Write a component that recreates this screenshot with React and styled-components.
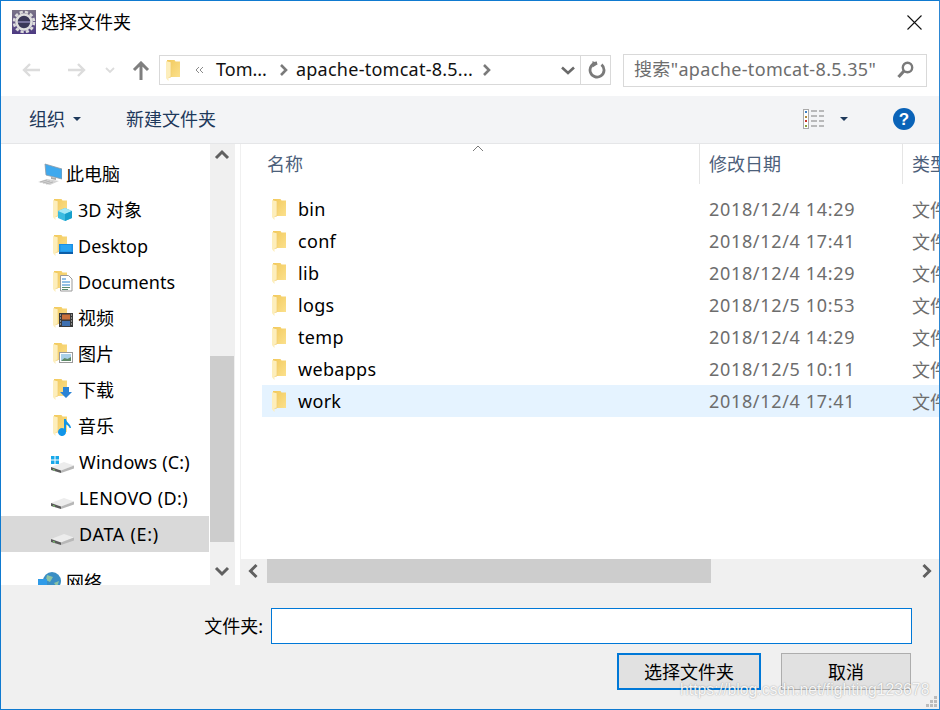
import React from "react";
import styled, { createGlobalStyle } from "styled-components";

const Global = createGlobalStyle`
  html, body { margin: 0; padding: 0; background: #fff; }
  * { box-sizing: border-box; }
  body { font-family: "Noto Sans", "Noto Sans CJK SC", sans-serif; font-size: 18px; color: #000; }
`;

const Window = styled.div`
  position: relative; width: 940px; height: 710px; border: 1px solid #0f7ad0; border-right-color: #2d87d3;
  background: #fff; display: flex; flex-direction: column; overflow: hidden;
`;
const TitleBar = styled.div`
  height: 44px; flex: none; display: flex; align-items: center; padding: 0 17px 2px 11px;
`;
const Title = styled.div`
  margin-left: 5px; flex: 1; font-size: 18px; line-height: 24px;
`;
const NavBar = styled.div`
  height: 51px; flex: none; display: flex; align-items: center; padding: 0 12px 1px 19px;
`;
const NavIcon = styled.span`
  display: inline-flex; flex: none; width: ${p => p.$w}px; margin-right: ${p => p.$mr || 0}px; align-items: center; justify-content: center;
`;
const AddressBox = styled.div`
  width: 452px; height: 30px; flex: none; border: 1px solid #d9d9d9; display: flex; align-items: center; padding-left: 6px; margin-left: 8px;
`;
const Crumb = styled.span`
  margin: 0 0 2px ${p => p.$ml}px; white-space: nowrap; line-height: 26px; color: #111; letter-spacing: ${p => p.$ls || 0}px;
`;
const AddressSep = styled.div`
  width: 1px; height: 28px; flex: none; background: #d9d9d9; margin: 0 7px 0 5px;
`;
const SearchBox = styled.div`
  width: 304px; height: 33px; flex: none; margin-left: 12px; border: 1px solid #d9d9d9; display: flex; align-items: center; justify-content: space-between; padding: 0 12px 0 10px;
  color: #6d6d6d; font-size: 18px; white-space: nowrap; letter-spacing: .35px;
`;
const SearchText = styled.span`
  margin-bottom: 2px; line-height: 26px;
`;
const Toolbar = styled.div`
  height: 48px; flex: none; background: #f3f4f6; border-bottom: 1px solid #e5e6e8; display: flex; align-items: center; padding: 0 24px 2px 28px; color: #1e395b;
`;
const ToolLabel = styled.span`
  line-height: 24px; margin-left: ${p => p.$ml || 0}px;
`;
const Caret = styled.span`
  display: inline-block; width: 0; height: 0; border-left: 4px solid transparent; border-right: 4px solid transparent; border-top: 4px solid #1e395b;
  margin-left: ${p => p.$ml}px; flex: none;
`;
const Spacer = styled.div`
  flex: 1;
`;
const Main = styled.div`
  height: 441px; flex: none; display: flex; overflow: hidden;
`;
const Sidebar = styled.div`
  width: 209px; flex: none; overflow: hidden; padding-top: 12px;
`;
const TreeRow = styled.div`
  height: 36px; display: flex; align-items: center; padding-left: ${p => p.$pl}px; white-space: nowrap; margin-right: 1px;
  background: ${p => p.$selected ? "#d9d9d9" : "transparent"};
  margin-top: ${p => p.$gap || 0}px;
`;
const TreeLabel = styled.span`
  margin-left: ${p => p.$ml}px; line-height: 24px; letter-spacing: ${p => p.$ls || 0}px;
`;
const VScroll = styled.div`
  width: 25px; flex: none; background: #f0f0f0; display: flex; flex-direction: column;
`;
const ArrowCell = styled.div`
  height: ${p => p.$h}px; flex: none; display: flex; align-items: center; justify-content: center; padding-right: 1px;
`;
const VTrack = styled.div`
  height: 188px; flex: none;
`;
const VThumb = styled.div`
  height: 186px; width: 24px; flex: none; background: #cdcdcd;
`;
const Divider = styled.div`
  width: 6px; flex: none; background: #fff; border-right: 1px solid #f0f0f0;
`;
const Content = styled.div`
  flex: 1; min-width: 0; display: flex; flex-direction: column;
`;
const HeaderRow = styled.div`
  height: 40px; flex: none; display: grid; grid-template-columns: 459px 203px 1fr; position: relative;
`;
const HeaderCell = styled.div`
  color: #4c607a; padding-left: ${p => p.$pl}px; line-height: 40px; white-space: nowrap; overflow: hidden;
  border-right: ${p => p.$line ? "1px solid #e5e5e5" : "none"};
`;
const SortCaret = styled.svg`
  position: absolute; left: 231px; top: 1px;
`;
const FileList = styled.div`
  flex: 1; padding: 9px 0 0 21px;
`;
const FileRow = styled.div`
  height: 32px; display: grid; grid-template-columns: 26px 411px 203px 1fr; align-items: center; padding-left: 10px; white-space: nowrap; overflow: hidden;
  background: ${p => p.$selected ? "#e5f3ff" : "transparent"};
`;
const FileName = styled.span`
  letter-spacing: .3px;
`;
const FileDate = styled.span`
  color: #6d6d6d; letter-spacing: .67px;
`;
const FileType = styled.span`
  color: #6d6d6d;
`;
const HScroll = styled.div`
  height: 26px; flex: none; background: #f0f0f0; display: flex; align-items: flex-start;
`;
const HThumb = styled.div`
  width: 444px; height: 24px; flex: none; background: #cdcdcd;
`;
const HArrow = styled.div`
  width: 26px; height: 24px; flex: none; display: flex; align-items: center; justify-content: center;
`;
const Footer = styled.div`
  flex: 1; background: #f0f0f0; display: flex; flex-direction: column; padding: 23px 27px 0 0; align-items: flex-end;
`;
const InputRow = styled.div`
  display: flex; align-items: center; height: 36px;
`;
const Label = styled.label`
  margin-right: 8px; line-height: 24px;
`;
const TextBox = styled.div`
  width: 641px; height: 36px; background: #fff; border: 1px solid #0078d7;
`;
const ButtonRow = styled.div`
  display: flex; margin-top: 9px; gap: 20px; margin-right: 1px;
`;
const Button = styled.button`
  width: ${p => p.$w}px; height: 37px; font: inherit; color: #000; background: #e1e1e1; padding: 0 0 2px;
  border: ${p => p.$primary ? "2px solid #0078d7" : "1px solid #adadad"};
`;
const Watermark = styled.div`
  position: absolute; left: 679px; top: 677px; font-family: "Liberation Sans", sans-serif; font-size: 15.800px; line-height: 24px; color: rgba(255,255,255,.92); white-space: nowrap;
  text-shadow: 0 0 1.500px rgba(0,0,0,.4);
`;
const Grip = styled.svg`
  position: absolute; right: 1px; bottom: 1px;
`;

const FolderShape = ({ id }) => (
  <>
    <defs>
      <linearGradient id={id} x1="0" y1="0" x2="1" y2="1">
        <stop offset="0" stopColor="#f2c95c" />
        <stop offset="1" stopColor="#fbe08c" />
      </linearGradient>
    </defs>
    <path d="M1 0h7.500l1 1.500H14V17H4V2H1z" fill={`url(#${id})`} />
    <path d="M0 1l5 1.600V17l-2.500.6V21L1 19.500 0 18z" fill="#fdeebb" />
    <path d="M5 2.600V17l-2.500.6" fill="none" stroke="#f0cd70" strokeWidth=".7" />
  </>
);

const Folder = ({ id }) => (
  <svg width="14" height="21" viewBox="0 0 14 21"><FolderShape id={id} /></svg>
);

const overlays = {
  cube: <g><path d="M6 14l7-3 7 3v7l-7 3-7-3z" fill="#3bbbe0"/><path d="M6 14l7 3 7-3-7-3z" fill="#a4e8f6"/><path d="M13 17v7l7-3v-7z" fill="#17a0cc"/></g>,
  desk: <g><rect x="7" y="11" width="14" height="10" fill="#1a8fe6"/><rect x="7" y="19" width="14" height="2" fill="#0c5ea8"/><rect x="8.500" y="12" width="11" height="6.500" fill="#2aa5f2"/></g>,
  doc: <g><path d="M8.500 6.500h8l3.500 3.500v12H8.500z" fill="#fff" stroke="#9a9a9a"/><path d="M10 10h4M10 13h8M10 16h8" stroke="#2a82cc"/><path d="M10 18.500h8M10 20.500h6" stroke="#5b8a6e"/></g>,
  film: <g><rect x="7" y="8" width="14" height="14" fill="#3a3a3a"/><rect x="10" y="9.500" width="8" height="5" fill="#c9703a"/><rect x="10" y="16" width="8" height="5" fill="#3d6fb0"/><path d="M8 10h1M8 13h1M8 16h1M8 19h1M19 10h1M19 13h1M19 16h1M19 19h1" stroke="#ddd"/></g>,
  pic: <g><rect x="7.500" y="11.500" width="13" height="10" fill="#fff" stroke="#9a9a9a"/><rect x="9" y="13" width="10" height="7" fill="#a9cfe8"/><path d="M9 20l3.500-3 3 1 3.500-2v4z" fill="#5f8a68"/></g>,
  down: <path d="M11 10h6v5h3l-6 6-6-6h3z" fill="#2a83d6"/>,
  music: <path d="M12 6h2c.5 4 5 5 5 9h-1.500c0-1.500-2-3-3.500-3.500V19a4 4 0 1 1-2-3.400z" fill="#1295e8"/>,
};

const LibIcon = ({ kind }) => (
  <svg width="24" height="26" viewBox="0 0 24 26">
    <g transform="translate(1 2)"><FolderShape id={`lib-${kind}`} /></g>
    {overlays[kind]}
  </svg>
);

const Drive = ({ win }) => (
  <svg width="26" height="23" viewBox="0 0 26 23">
    {win && <g fill="#18a8ea"><rect x="2" y="5" width="3.500" height="3.500"/><rect x="6.500" y="5" width="3.500" height="3.500"/><rect x="2" y="9.500" width="3.500" height="3.500"/><rect x="6.500" y="9.500" width="3.500" height="3.500"/></g>}
    <path d="M2 16l13-5 10 3.500L12 19.500z" fill="#ececec"/>
    <path d="M12 19.500l13-5v3l-13 4.500z" fill="#b8b8b8"/>
    <path d="M2 16l10 3.500V22L2 19z" fill="#5a5a5a"/>
    <path d="M4 18l2 .7v1l-2-.6z" fill="#7ed66f"/>
  </svg>
);

const Chevron = ({ dir, color = "#606060" }) => {
  const d = { up: "M2 10l6-6 6 6", down: "M2 5l6 6 6-6", left: "M10.500 2L4.500 8l6 6", right: "M5.500 2l6 6-6 6" }[dir];
  return <svg width="16" height="16" viewBox="0 0 16 16"><path d={d} fill="none" stroke={color} strokeWidth="3"/></svg>;
};

const files = [
  ["bin", "2018/12/4 14:29"], ["conf", "2018/12/4 17:41"], ["lib", "2018/12/4 14:29"], ["logs", "2018/12/5 10:53"],
  ["temp", "2018/12/4 14:29"], ["webapps", "2018/12/5 10:11"], ["work", "2018/12/4 17:41", true],
];
const libs = [["cube", "3D 对象"], ["desk", "Desktop"], ["doc", "Documents"], ["film", "视频"], ["pic", "图片"], ["down", "下载"], ["music", "音乐"]];

export default function App() {
  return (
    <Window>
      <Global />
      <TitleBar>
        <svg width="24" height="24" viewBox="0 0 24 24">
          <defs>
            <linearGradient id="appbg" x1="0" y1="0" x2="0" y2="1">
              <stop offset="0" stopColor="#7a7488" />
              <stop offset="1" stopColor="#4d3a82" />
            </linearGradient>
          </defs>
          <rect width="24" height="24" fill="url(#appbg)"/>
          <circle cx="12" cy="12" r="10" fill="none" stroke="#dcdcdc" strokeWidth="2.600" strokeDasharray="3.200 2.100"/>
          <circle cx="12" cy="12" r="7.500" fill="#3a3858" stroke="#dedede" strokeWidth="2.600"/>
          <rect x="6" y="11" width="12" height="2" fill="#77729c"/>
        </svg>
        <Title>选择文件夹</Title>
        <svg width="15" height="15" viewBox="0 0 15 15"><path d="M.5.500l14 14M14.500.500l-14 14" stroke="#111" strokeWidth="1.100" fill="none"/></svg>
      </TitleBar>
      <NavBar>
        <NavIcon $w={22} $mr={24}><svg width="20" height="16" viewBox="0 0 20 16"><path d="M19 8H3M9 2L3 8l6 6" fill="none" stroke="#dcdcdc" strokeWidth="2.400"/></svg></NavIcon>
        <NavIcon $w={22} $mr={16}><svg width="20" height="16" viewBox="0 0 20 16"><path d="M1 8h16M11 2l6 6-6 6" fill="none" stroke="#dcdcdc" strokeWidth="2.400"/></svg></NavIcon>
        <NavIcon $w={12} $mr={15}><svg width="10" height="7" viewBox="0 0 10 7"><path d="M1 1l4 4 4-4" fill="none" stroke="#dcdcdc" strokeWidth="1.800"/></svg></NavIcon>
        <NavIcon $w={20}><svg width="18" height="19" viewBox="0 0 18 19"><path d="M9 19V3M2 9l7-7 7 7" fill="none" stroke="#7f7f7f" strokeWidth="3"/></svg></NavIcon>
        <AddressBox>
          <Folder id="addr" />
          <svg style={{ marginLeft: 15 }} width="9" height="8" viewBox="0 0 9 8"><path d="M4 1L1 4l3 3M8 1L5 4l3 3" fill="none" stroke="#8a8a8a" strokeWidth="1"/></svg>
          <Crumb $ml={12}>Tom...</Crumb>
          <svg style={{ marginLeft: 12 }} width="9" height="12" viewBox="0 0 9 12"><path d="M2 1l5 5-5 5" fill="none" stroke="#7a7a7a" strokeWidth="2.600"/></svg>
          <Crumb $ml={8} $ls={0.25}>apache-tomcat-8.5...</Crumb>
          <svg style={{ marginLeft: 9 }} width="9" height="12" viewBox="0 0 9 12"><path d="M2 1l5 5-5 5" fill="none" stroke="#7a7a7a" strokeWidth="2.600"/></svg>
          <Spacer />
          <svg width="14" height="9" viewBox="0 0 14 9"><path d="M1 1.500l6 5.500 6-5.500" fill="none" stroke="#6a6a6a" strokeWidth="2.600"/></svg>
          <AddressSep />
          <svg style={{ marginRight: 4 }} width="18" height="18" viewBox="0 0 18 18"><path d="M13.500 3.600A7 7 0 1 1 9 2" fill="none" stroke="#7a7a7a" strokeWidth="2.800"/><path d="M4.500 0v6.500L10 3z" fill="#7a7a7a"/></svg>
        </AddressBox>
        <SearchBox>
          <SearchText>搜索"apache-tomcat-8.5.35"</SearchText>
          <svg width="17" height="18" viewBox="0 0 17 18"><circle cx="10.500" cy="6.500" r="4.700" fill="none" stroke="#7a7a7a" strokeWidth="2.400"/><path d="M7 10l-5.500 6" stroke="#7a7a7a" strokeWidth="3.200"/></svg>
        </SearchBox>
      </NavBar>
      <Toolbar>
        <ToolLabel>组织</ToolLabel>
        <Caret $ml={8} />
        <ToolLabel $ml={45}>新建文件夹</ToolLabel>
        <Spacer />
        <svg width="22" height="22" viewBox="0 0 22 22">
          <rect x="0.500" y="1.500" width="5" height="19" fill="#fff" stroke="#a9a9a9"/>
          <rect x="2" y="3" width="2" height="2" fill="#3d7fc4"/><rect x="2" y="8" width="2" height="2" fill="#b08a3a"/><rect x="2" y="12" width="2" height="2" fill="#c8332a"/><rect x="2" y="17" width="2" height="2" fill="#8aa03a"/>
          <path d="M8 3h6M16 3h5M8 8h6M16 8h5M8 13h6M16 13h5M8 18h6M16 18h5" stroke="#7f7f7f" strokeWidth="1"/>
        </svg>
        <Caret $ml={15} />
        <svg style={{ marginLeft: 45 }} width="22" height="22" viewBox="0 0 22 22">
          <circle cx="11" cy="11" r="11" fill="#0a63b8"/>
          <text x="11" y="17" textAnchor="middle" fontFamily="Liberation Sans" fontSize="17" fontWeight="700" fill="#fff">?</text>
        </svg>
      </Toolbar>
      <Main>
        <Sidebar>
          <TreeRow $pl={37}>
            <svg width="24" height="23" viewBox="0 0 24 23">
              <path d="M7 1l17 5v10L8 12z" fill="#3fa9ee" stroke="#8f99a3" strokeWidth=".8"/>
              <path d="M0 19l9-3 12 2-9 4z" fill="#d4d4d4"/>
              <path d="M2 19l7-2M5 20l7-2M8 21l7-2" stroke="#a8a8a8" strokeWidth=".7"/>
              <path d="M13 14l5 1v2l-5-1z" fill="#aaa"/>
            </svg>
            <TreeLabel $ml={4}>此电脑</TreeLabel>
          </TreeRow>
          {libs.map(([k, t]) => (
            <TreeRow key={k} $pl={51}><LibIcon kind={k} /><TreeLabel $ml={2}>{t}</TreeLabel></TreeRow>
          ))}
          <TreeRow $pl={48}><Drive win /><TreeLabel $ml={4} $ls={0.2}>Windows (C:)</TreeLabel></TreeRow>
          <TreeRow $pl={48}><Drive /><TreeLabel $ml={4} $ls={0.35}>LENOVO (D:)</TreeLabel></TreeRow>
          <TreeRow $pl={48} $selected><Drive /><TreeLabel $ml={4} $ls={0.7}>DATA (E:)</TreeLabel></TreeRow>
          <TreeRow $pl={37} $gap={12}>
            <svg width="24" height="24" viewBox="0 0 24 24">
              <circle cx="14" cy="11" r="9" fill="#3a8ec4"/><path d="M9 5l6 2-3 5-4-2zM16 13l5-2-2 6z" fill="#8cc3a4"/>
              <rect x="0" y="9" width="9" height="9" fill="#2f9be8"/>
            </svg>
            <TreeLabel $ml={4}>网络</TreeLabel>
          </TreeRow>
        </Sidebar>
        <VScroll>
          <ArrowCell $h={24}><Chevron dir="up" /></ArrowCell>
          <VTrack />
          <VThumb />
          <Spacer />
          <ArrowCell $h={28}><Chevron dir="down" /></ArrowCell>
        </VScroll>
        <Divider />
        <Content>
          <HeaderRow>
            <HeaderCell $pl={26} $line>名称</HeaderCell>
            <HeaderCell $pl={9} $line>修改日期</HeaderCell>
            <HeaderCell $pl={9}>类型</HeaderCell>
            <SortCaret width="12" height="7" viewBox="0 0 12 7"><path d="M1 6l5-5 5 5" fill="none" stroke="#7a7a7a" strokeWidth="1"/></SortCaret>
          </HeaderRow>
          <FileList>
            {files.map(([n, d, s]) => (
              <FileRow key={n} $selected={s}>
                <Folder id={`f-${n}`} />
                <FileName>{n}</FileName>
                <FileDate>{d}</FileDate>
                <FileType>文件夹</FileType>
              </FileRow>
            ))}
          </FileList>
          <HScroll>
            <HArrow><Chevron dir="left" /></HArrow>
            <HThumb />
            <Spacer />
            <HArrow><Chevron dir="right" /></HArrow>
          </HScroll>
        </Content>
      </Main>
      <Footer>
        <InputRow><Label>文件夹:</Label><TextBox /></InputRow>
        <ButtonRow>
          <Button $w={144} $primary>选择文件夹</Button>
          <Button $w={130}>取消</Button>
        </ButtonRow>
      </Footer>
      <Watermark>https://blog.csdn.net/fighting123678</Watermark>
      <Grip width="12" height="12" viewBox="0 0 12 12" fill="#bcbcbc">
        <rect x="8" y="0" width="3" height="3"/><rect x="4" y="4" width="3" height="3"/><rect x="8" y="4" width="3" height="3"/><rect x="0" y="8" width="3" height="3"/><rect x="4" y="8" width="3" height="3"/><rect x="8" y="8" width="3" height="3"/>
      </Grip>
    </Window>
  );
}
